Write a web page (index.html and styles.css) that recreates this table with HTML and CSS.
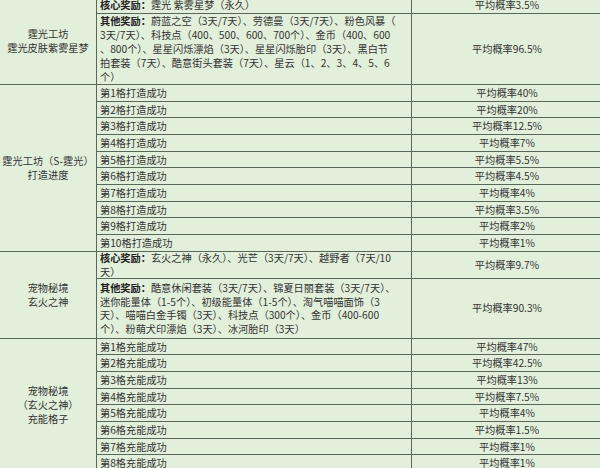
FILE: index.html
```html
<!DOCTYPE html>
<html lang="zh-CN">
<head>
<meta charset="utf-8">
<title>概率表</title>
<link rel="stylesheet" href="styles.css">
</head>
<body>
<div class="sheet">
  <div class="grid">
    <div class="cell name span2">霆光工坊<br>霆光皮肤紫雾星梦</div>
    <div class="cell item"><span class="text"><b>核心奖励：</b>霆光 紫雾星梦（永久）</span></div>
    <div class="cell rate">平均概率3.5%</div>
    <div class="cell item"><span class="text"><b>其他奖励：</b>蔚蓝之空（3天/7天）、劳德曼（3天/7天）、粉色风暴（<br>3天/7天）、科技点（400、500、600、700个）、金币（400、600<br>、800个）、星星闪烁漂焰（3天）、星星闪烁胎印（3天）、黑白节<br>拍套装（7天）、酷意街头套装（7天）、星云（1、2、3、4、5、6<br>个）</span></div>
    <div class="cell rate">平均概率96.5%</div>

    <div class="cell name span10">霆光工坊（S-霆光）<br>打造进度</div>
    <div class="cell item">第1格打造成功</div><div class="cell rate">平均概率40%</div>
    <div class="cell item">第2格打造成功</div><div class="cell rate">平均概率20%</div>
    <div class="cell item">第3格打造成功</div><div class="cell rate">平均概率12.5%</div>
    <div class="cell item">第4格打造成功</div><div class="cell rate">平均概率7%</div>
    <div class="cell item">第5格打造成功</div><div class="cell rate">平均概率5.5%</div>
    <div class="cell item">第6格打造成功</div><div class="cell rate">平均概率4.5%</div>
    <div class="cell item">第7格打造成功</div><div class="cell rate">平均概率4%</div>
    <div class="cell item">第8格打造成功</div><div class="cell rate">平均概率3.5%</div>
    <div class="cell item">第9格打造成功</div><div class="cell rate">平均概率2%</div>
    <div class="cell item">第10格打造成功</div><div class="cell rate">平均概率1%</div>

    <div class="cell name span2">宠物秘境<br>玄火之神</div>
    <div class="cell item"><span class="text"><b>核心奖励：</b>玄火之神（永久）、光芒（3天/7天）、越野者（7天/10<br>天）</span></div>
    <div class="cell rate">平均概率9.7%</div>
    <div class="cell item"><span class="text"><b>其他奖励：</b>酷意休闲套装（3天/7天）、锦夏日丽套装（3天/7天）、<br>迷你能量体（1-5个）、初级能量体（1-5个）、淘气喵喵面饰（3<br>天）、喵喵白金手镯（3天）、科技点（300个）、金币（400-600<br>个）、粉萌犬印漂焰（3天）、冰河胎印（3天）</span></div>
    <div class="cell rate">平均概率90.3%</div>

    <div class="cell name span8">宠物秘境<br>（玄火之神）<br>充能格子</div>
    <div class="cell item">第1格充能成功</div><div class="cell rate">平均概率47%</div>
    <div class="cell item">第2格充能成功</div><div class="cell rate">平均概率42.5%</div>
    <div class="cell item">第3格充能成功</div><div class="cell rate">平均概率13%</div>
    <div class="cell item">第4格充能成功</div><div class="cell rate">平均概率7.5%</div>
    <div class="cell item">第5格充能成功</div><div class="cell rate">平均概率4%</div>
    <div class="cell item">第6格充能成功</div><div class="cell rate">平均概率1.5%</div>
    <div class="cell item">第7格充能成功</div><div class="cell rate">平均概率1%</div>
    <div class="cell item">第8格充能成功</div><div class="cell rate">平均概率1%</div>
  </div>
</div>
</body>
</html>
```

FILE: styles.css
```css
html, body {
  margin: 0;
  padding: 0;
  background: #e2efda;
  overflow: hidden;
}

body {
  width: 600px;
  height: 468px;
  font-family: "Noto Sans CJK SC", "Noto Sans", sans-serif;
  font-size: 10.2px;
  color: #333333;
}

.sheet {
  width: 600px;
  height: 468px;
  overflow: hidden;
}

.grid {
  margin-top: -2.9px;
  width: 606px;
  display: grid;
  grid-template-columns: 96px 314px 194px;
  grid-template-rows:
    15.7px 70.2px
    15.67px 15.67px 15.67px 15.67px 15.67px 15.67px 15.67px 15.67px 15.67px 15.67px
    26.6px 58.5px
    15.67px 15.67px 15.67px 15.67px 15.67px 15.67px 15.67px 15.67px 15.67px;
  gap: 1px;
  background: #59665a;
  border-bottom: 1px solid #59665a;
}

.cell {
  background: #e2efda;
  display: flex;
  align-items: center;
  white-space: nowrap;
  overflow: hidden;
  line-height: 13.8px;
}

.name {
  justify-content: center;
  text-align: center;
  line-height: 14px;
}

.span2 { grid-row: span 2; }
.span8 { grid-row: span 8; }
.span10 { grid-row: span 10; }

.item {
  padding-left: 3px;
}

.text b {
  font-weight: 700;
  color: #222222;
}

.rate {
  justify-content: center;
  padding-right: 4px;
}
```
